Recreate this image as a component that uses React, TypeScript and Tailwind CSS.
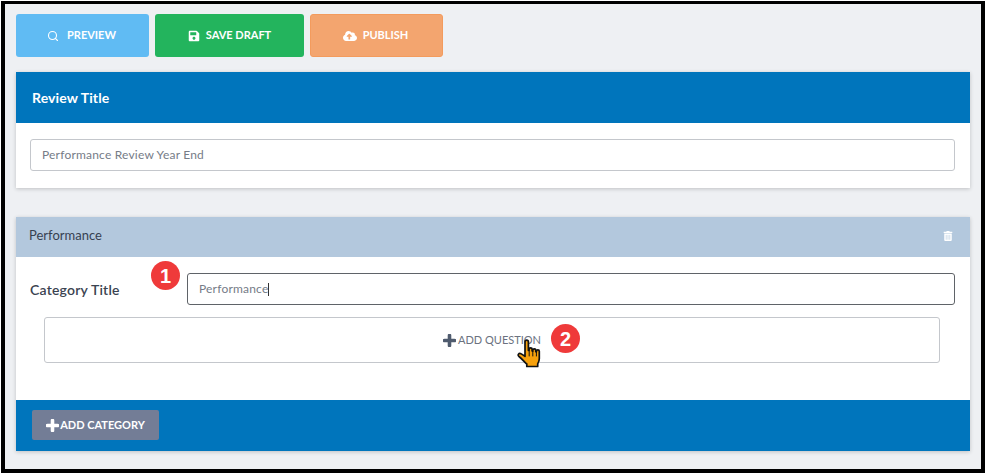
import { Search } from "lucide-react";
import { FaSave, FaCloudUploadAlt, FaTrashAlt } from "react-icons/fa";

function Hand() {
  return (
    <svg width="25" height="30" viewBox="0 0 25 30" className="absolute left-[517px] top-[339px]">
      <path
        d="M8 3c0-2.4 3.4-2.4 3.4 0v8.4l.7.1v-1.2c0-1.9 3-1.9 3 0v1.7l.7.1v-.9c0-1.9 3-1.9 3 0v1.5l.6.1v-.5c0-1.8 2.9-1.8 2.9 0v7.2c0 2.4-.7 3.9-1.6 5.4v2.6H9.8v-2.5c-2-1.7-4.6-5-7.8-7.5-1.8-1.5-.2-3.9 2-2.8 1.5.7 2.8 1.7 4 2.7z"
        fill="#f7a10c"
        stroke="#111"
        strokeWidth="1.7"
        strokeLinejoin="round"
      />
      <path d="M12.2 12v5M15.8 12.5v4.5M19.4 13v4" stroke="#111" strokeWidth="1" strokeLinecap="round" />
    </svg>
  );
}

function Cross({ className }: { className: string }) {
  return (
    <svg width="13" height="13" viewBox="0 0 13 13" className={className}>
      <path d="M6.5 1.5v10M1.5 6.5h10" stroke="currentColor" strokeWidth="3.6" strokeLinecap="round" />
    </svg>
  );
}

function Badge({ n, className }: { n: string; className: string }) {
  return (
    <div className={`absolute flex h-[29px] w-[29px] items-center justify-center rounded-full bg-[#ef3a3a] font-['Liberation_Sans',sans-serif] text-[20px] font-bold text-white ${className}`}>
      {n}
    </div>
  );
}

export default function App() {
  return (
    <div className="relative h-[474px] w-[985px] bg-white pt-px pl-px font-['Lato','Liberation_Sans',sans-serif]">
      <div className="h-[472px] w-[984px] border-[4px] border-t-[3px] border-black bg-[#eef0f3] pt-[10px] pl-[11px] text-white">
        <div className="flex gap-1.5">
          <button className="flex h-[43px] w-[133px] items-center justify-center gap-2 rounded-[3px] bg-[#60bbf3] pr-0.5 text-[11px] font-bold">
            <Search size={12} strokeWidth={2.2} />
            PREVIEW
          </button>
          <button className="flex h-[43px] w-[149px] items-center justify-center gap-1.5 rounded-[3px] bg-[#23b45d] text-[11px] font-bold">
            <FaSave size={12} />
            SAVE DRAFT
          </button>
          <button className="flex h-[43px] w-[133px] items-center justify-center gap-1.5 rounded-[3px] border border-[#f39b5d] bg-[#f3a56f] pr-0.5 text-[11px] font-bold">
            <FaCloudUploadAlt size={14} />
            PUBLISH
          </button>
        </div>

        <section className="mt-[15px] w-[954px] bg-white shadow-[0_1px_4px_rgba(0,0,0,0.2)]">
          <div className="flex h-[51px] items-center bg-[#0075bc] px-4 text-[14px] font-bold tracking-[0.1px]">Review Title</div>
          <div className="px-[14px] pt-4 pb-[17px]">
            <div className="flex h-8 w-[925px] items-center rounded-[3px] border border-[#c4c7cc] px-[11px] text-[12px] tracking-[0.2px] text-[#767c87]">
              Performance Review Year End
            </div>
          </div>
        </section>

        <section className="mt-[29px] w-[954px] bg-white shadow-[0_1px_4px_rgba(0,0,0,0.2)]">
          <div className="flex h-10 items-center justify-between bg-[#b3c8dd] pr-[17px] pb-0.5 pl-[13px] text-[13px] text-[#374151]">
            Performance
            <FaTrashAlt size={10} className="text-white" />
          </div>
          <div className="h-[143px] px-[14px] pt-4">
            <div className="flex items-center">
              <div className="w-[157px] text-[14px] font-semibold tracking-[0.2px] text-[#3b4351]">Category Title</div>
              <div className="flex h-8 w-[768px] items-center rounded-[3px] border border-[#5f6368] px-[11px] text-[12px] tracking-[0.2px] text-[#767c87]">
                Performance<span className="h-[13px] w-px bg-[#333]" />
              </div>
            </div>
            <div className="mt-3 ml-[14px] flex h-[46px] w-[896px] items-center justify-center gap-[2px] rounded-[3px] border border-[#c4c7cc] text-[11px] text-[#6b7280]">
              <Cross className="text-[#4f5b6e]" />
              ADD QUESTION
            </div>
          </div>
          <div className="flex h-[51px] items-center bg-[#0075bc] pb-0.5 pl-4">
            <button className="flex h-[30px] w-[127px] items-center justify-center gap-px rounded-[2px] bg-[#737d96] pt-px text-[11px] font-bold">
              <Cross className="text-white" />
              ADD CATEGORY
            </button>
          </div>
        </section>
      </div>
      <Badge n="1" className="left-[151px] top-[261px]" />
      <Badge n="2" className="left-[551px] top-[324px]" />
      <Hand />
    </div>
  );
}
